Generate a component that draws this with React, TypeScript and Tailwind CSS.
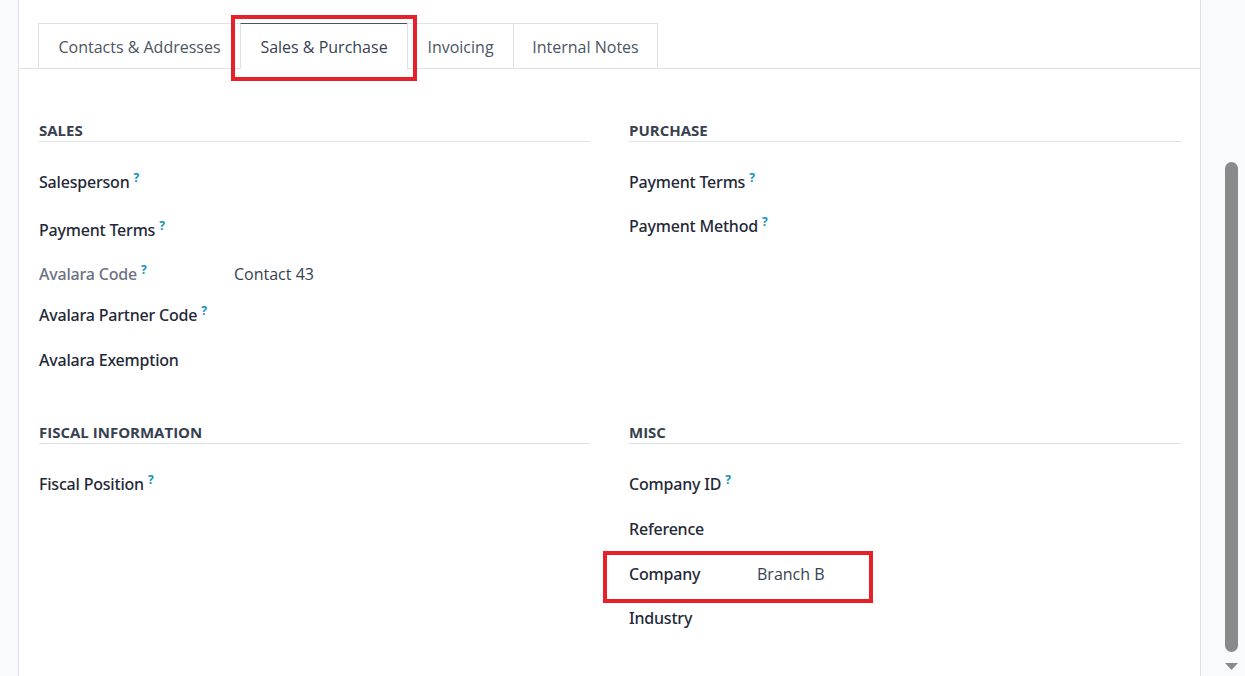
import React from "react";

type Field = { label: string; help?: boolean; value?: string; muted?: boolean; h: number };

const sales: Field[] = [
  { label: "Salesperson", help: true, h: 44 },
  { label: "Payment Terms", help: true, h: 52 },
  { label: "Avalara Code", help: true, value: "Contact 43", muted: true, h: 36 },
  { label: "Avalara Partner Code", help: true, h: 46 },
  { label: "Avalara Exemption", h: 44 },
];

const purchase: Field[] = [
  { label: "Payment Terms", help: true, h: 44 },
  { label: "Payment Method", help: true, h: 44 },
];

const fiscal: Field[] = [{ label: "Fiscal Position", help: true, h: 44 }];

const misc: Field[] = [
  { label: "Company ID", help: true, h: 44 },
  { label: "Reference", h: 46 },
  { label: "Company", value: "Branch B", h: 44 },
  { label: "Industry", h: 44 },
];

const tabs = [
  { name: "Contacts & Addresses", w: "w-[203px]" },
  { name: "Sales & Purchase", w: "w-[168px]" },
  { name: "Invoicing", w: "w-[107px]" },
  { name: "Internal Notes", w: "w-[145px]" },
];

function Section({
  title,
  fields,
  labelWidth,
  top,
}: {
  title: string;
  fields: Field[];
  labelWidth: string;
  top: string;
}) {
  return (
    <div className={top}>
      <div className="border-b border-[#dee2e6] pb-[1px] text-[15px] leading-5 font-bold uppercase text-[#374151]">
        {title}
      </div>
      <div className="mt-[18px] flex flex-col">
        {fields.map((f) => (
          <div key={f.label} className="flex items-center" style={{ height: f.h }}>
            <div
              className={`${labelWidth} shrink-0 text-[16px] font-medium tracking-[-0.2px] ${
                f.muted ? "text-[#6b7280]" : "text-[#1f2937]"
              }`}
              style={{ fontFamily: '"Noto Sans", "Open Sans", sans-serif' }}
            >
              {f.label}
              {f.help ? (
                <sup className="ml-1 text-[12px] font-bold text-[#1390b5]">?</sup>
              ) : null}
            </div>
            {f.value ? <div className="text-[16px] text-[#374151]">{f.value}</div> : null}
          </div>
        ))}
      </div>
    </div>
  );
}

export default function App() {
  return (
    <div
      className="relative flex h-[676px] w-[1245px] overflow-hidden bg-[#f9fafb]"
      style={{ fontFamily: '"Open Sans", "Noto Sans", sans-serif' }}
    >
      <div className="w-[19px] shrink-0 border-r border-[#dee2e6] bg-[#f9fafb]" />

      <div className="w-[1182px] shrink-0 border-r border-[#dee2e6] bg-white pt-[23px]">
        {/* tabs */}
        <div className="flex border-b border-[#dee2e6] pl-[19px]">
          {tabs.map((t, i) => {
            const active = i === 1;
            return (
              <div
                key={t.name}
                className={`${t.w} -mb-px flex h-[46px] items-center justify-center border pt-[2px] text-[16px] ${
                  active
                    ? "border-[#dee2e6] border-t-[#5b4b6a] border-b-white bg-white text-[#374151]"
                    : "border-[#dee2e6] text-[#4b5563]"
                } ${i > 0 ? "-ml-px" : ""}`}
              >
                {t.name}
              </div>
            );
          })}
        </div>

        {/* groups */}
        <div className="grid grid-cols-[551px_552px] gap-x-[39px] pl-[20px] pt-[51px]">
          <Section title="Sales" fields={sales} labelWidth="w-[195px]" top="" />
          <Section title="Purchase" fields={purchase} labelWidth="w-[195px]" top="" />
          <Section title="Fiscal Information" fields={fiscal} labelWidth="w-[195px]" top="mt-[40px]" />
          <Section title="Misc" fields={misc} labelWidth="w-[128px]" top="mt-[40px]" />
        </div>
      </div>

      {/* scrollbar */}
      <div className="relative flex-1 bg-[#f9fafb]">
        <div className="absolute left-[24px] top-[162px] h-[490px] w-[13px] rounded-full bg-[#8a8a8a]" />
        <svg className="absolute left-[24px] top-[663px]" width="13" height="8" viewBox="0 0 13 8">
          <path d="M0 0 H13 L6.5 7 Z" fill="#8a8a8a" />
        </svg>
      </div>

      {/* annotation boxes */}
      <div className="pointer-events-none absolute left-[231px] top-[15px] h-[66px] w-[186px] border-4 border-[#e8202a]" />
      <div className="pointer-events-none absolute left-[603px] top-[551px] h-[52px] w-[270px] border-4 border-[#e8202a]" />
    </div>
  );
}
